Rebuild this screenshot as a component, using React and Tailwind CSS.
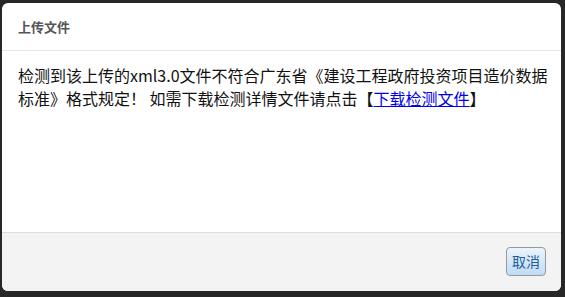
export default function App() {
  return (
    <div
      className="w-[565px] h-[297px] bg-[#272727] pl-[2px] pt-[3px] overflow-hidden"
      style={{ fontFamily: '"Noto Sans CJK SC", "Liberation Sans", sans-serif' }}
    >
      <div className="w-[559px] h-[288px] bg-white rounded-[6px] flex flex-col overflow-hidden">
        <div className="h-[48px] shrink-0 border-b border-[#e5e5e5] px-[16px] flex items-center">
          <span className="text-[13px] font-bold text-[#555555]">上传文件</span>
        </div>
        <div className="flex-1 pl-[16px] pr-[10px] pt-[13px] text-[16px] leading-[23px] text-[#111111]">
          检测到该上传的xml3.0文件不符合广东省《建设工程政府投资项目造价数据标准》格式规定！ 如需下载检测详情文件请点击【<a href="#" className="text-[#0000ee] underline">下载检测文件</a>】
        </div>
        <div className="h-[59px] shrink-0 bg-[#f3f3f3] border-t border-[#dddddd] flex items-start justify-end pt-[14px] pr-[15px]">
          <button className="w-[40px] h-[29px] rounded-[4px] border border-[#999999] bg-gradient-to-b from-[#eaf4fd] to-[#bfdcf5] text-[14px] text-[#1f5d99] flex items-center justify-center">
            取消
          </button>
        </div>
      </div>
    </div>
  );
}
